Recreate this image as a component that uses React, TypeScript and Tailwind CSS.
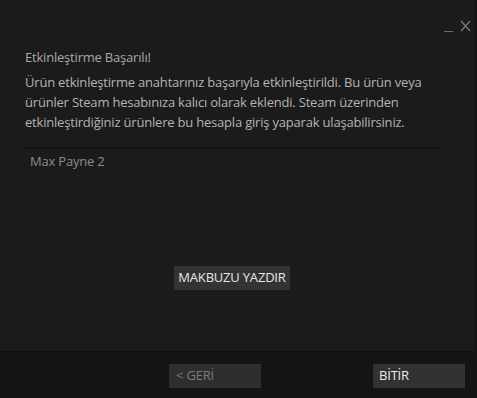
import React from "react";

const App = () => {
  return (
    <div
      className="flex h-[398px] w-[477px] bg-[#141414] text-[13px] tracking-[-0.2px]"
      style={{ fontFamily: '"Open Sans", "Noto Sans", sans-serif' }}
    >
      <div className="flex w-[474px] flex-col">
        <div className="flex h-[352px] flex-col border-b border-[#0e0e0e] bg-[#1b1b1b]">
          <div className="flex h-[40px] items-start justify-end gap-[7px] pr-[3px] pt-[20px]">
            <svg width="9" height="14" viewBox="0 0 9 14">
              <line x1="0" y1="11.5" x2="9" y2="11.5" stroke="#6e6e6e" strokeWidth="1" />
            </svg>
            <svg width="11" height="12" viewBox="0 0 11 12">
              <path d="M1 1 L10 11 M10 1 L1 11" stroke="#7a7a7a" strokeWidth="1.3" />
            </svg>
          </div>
          <div className="px-[25px] pt-[7px]">
            <h1 className="leading-[20px] text-[#a8a8a8]">Etkinleştirme Başarılı!</h1>
            <p className="mt-[5px] leading-[20px] text-[#b4b4b4]">
              Ürün etkinleştirme anahtarınız başarıyla etkinleştirildi. Bu ürün veya
              <br />
              ürünler Steam hesabınıza kalıcı olarak eklendi. Steam üzerinden
              <br />
              etkinleştirdiğiniz ürünlere bu hesapla giriş yaparak ulaşabilirsiniz.
            </p>
          </div>
          <div className="ml-[24px] mr-[31px] mt-[15px] border-t border-[#111111] pl-[6px] pt-[4px] leading-[18px] text-[#8c8c8c]">
            Max Payne 2
          </div>
          <div className="mt-[96px] flex justify-center pr-[10px]">
            <button className="flex h-[24px] w-[116px] items-center justify-center bg-[#333333] text-[#e6e6e6]">
              MAKBUZU YAZDIR
            </button>
          </div>
        </div>
        <div className="flex flex-1 items-start pt-[12px]">
          <button className="ml-[169px] flex h-[24px] w-[92px] items-center bg-[#2e2e2e] pl-[7px] text-[#7c7c7c]">
            &lt; GERİ
          </button>
          <button className="ml-[112px] flex h-[24px] w-[92px] items-center bg-[#323232] pl-[6px] text-[#ececec]">
            BİTİR
          </button>
        </div>
      </div>
    </div>
  );
};

export default App;
